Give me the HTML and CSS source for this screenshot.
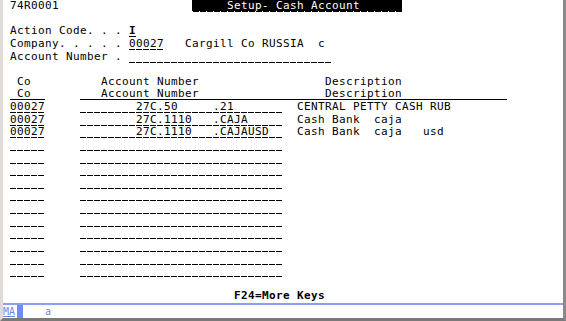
FILE: index.html
```html
<!DOCTYPE html>
<html lang="en">
<head>
    <meta charset="UTF-8">
    <title>Setup- Cash Account</title>
    <link rel="stylesheet" href="styles.css">
</head>
<body>
    <div class="terminal">
        <!-- 24 x 80 display area -->
        <div class="screen">
            <div class="row"> 74R0001                   <span class="rev">     Setup- Cash Account      </span></div>
            <div class="row"></div>
            <div class="row"> Action Code. . . <span class="ul bold">I</span></div>
            <div class="row"> Company. . . . . <span class="fld">00027</span>   Cargill Co RUSSIA  c</div>
            <div class="row"> Account Number . <span class="fld">                             </span></div>
            <div class="row"></div>
            <div class="row">  Co          Account Number                  Description</div>
            <div class="row"> <span class="ul"> Co  </span>     <span class="ul">   Account Number                  Description               </span></div>
            <div class="row"> <span class="fld">00027</span>     <span class="fld">        27C.50     .21       </span>  CENTRAL PETTY CASH RUB</div>
            <div class="row"> <span class="fld">00027</span>     <span class="fld">        27C.1110   .CAJA     </span>  Cash Bank  caja</div>
            <div class="row"> <span class="fld">00027</span>     <span class="fld">        27C.1110   .CAJAUSD  </span>  Cash Bank  caja   usd</div>
            <div class="row"> <span class="fld">     </span>     <span class="fld">                             </span></div>
            <div class="row"> <span class="fld">     </span>     <span class="fld">                             </span></div>
            <div class="row"> <span class="fld">     </span>     <span class="fld">                             </span></div>
            <div class="row"> <span class="fld">     </span>     <span class="fld">                             </span></div>
            <div class="row"> <span class="fld">     </span>     <span class="fld">                             </span></div>
            <div class="row"> <span class="fld">     </span>     <span class="fld">                             </span></div>
            <div class="row"> <span class="fld">     </span>     <span class="fld">                             </span></div>
            <div class="row"> <span class="fld">     </span>     <span class="fld">                             </span></div>
            <div class="row"> <span class="fld">     </span>     <span class="fld">                             </span></div>
            <div class="row"> <span class="fld">     </span>     <span class="fld">                             </span></div>
            <div class="row"> <span class="fld">     </span>     <span class="fld">                             </span></div>
            <div class="row"></div>
            <div class="row">                                 <span class="bold">F24=More Keys</span></div>
        </div>

        <!-- operator information area -->
        <div class="status">
            <span class="mode">MA</span><span class="cursor"></span><span class="kbd">a</span>
        </div>
    </div>
</body>
</html>
```

FILE: styles.css
```css
body {
    margin: 0;
    background: #ffffff;
}
.terminal {
    width: 566px;
    height: 321px;
    box-sizing: border-box;
    border-left: 3px solid #dedbd6;
    border-right: 3px solid #8a8a8a;
    border-bottom: 3px solid #7a7a7a;
    background: #ffffff;
    font-family: 'DejaVu Sans Mono', 'Liberation Mono', monospace;
    font-size: 11px;
    letter-spacing: 0.377px;
    color: #000000;
}
.screen {
    height: 303px;
}
.row {
    height: 12.625px;
    line-height: 12.625px;
    white-space: pre;
    overflow: hidden;
}
.rev {
    display: inline-block;
    vertical-align: top;
    height: 12px;
    line-height: 12px;
    background-color: #000000;
    color: #ffffff;
    background-image: linear-gradient(90deg, #ffffff 0 1px, transparent 1px 7px);
    background-size: 7px 1px;
    background-repeat: repeat-x;
    background-position: 0 100%;
}
.fld,
.ul {
    display: inline-block;
    vertical-align: top;
    height: 12.625px;
    background-repeat: repeat-x;
    background-position: 0 11px;
}
.fld {
    background-image: linear-gradient(90deg, #000000 0 6px, transparent 6px 7px);
    background-size: 7px 1px;
}
.ul {
    background-image: linear-gradient(#000000, #000000);
    background-size: 100% 1px;
}
.bold {
    font-weight: bold;
    letter-spacing: 0.377px;
}
.status {
    height: 13px;
    border-top: 2px solid #8c9ef0;
    display: flex;
    align-items: stretch;
    font-size: 10px;
    letter-spacing: 0;
    color: #6f86e6;
    line-height: 13px;
}
.mode {
    width: 14px;
    text-decoration: underline;
}
.cursor {
    width: 6px;
    background: #6f8cf0;
}
.kbd {
    margin-left: 22px;
}
```
